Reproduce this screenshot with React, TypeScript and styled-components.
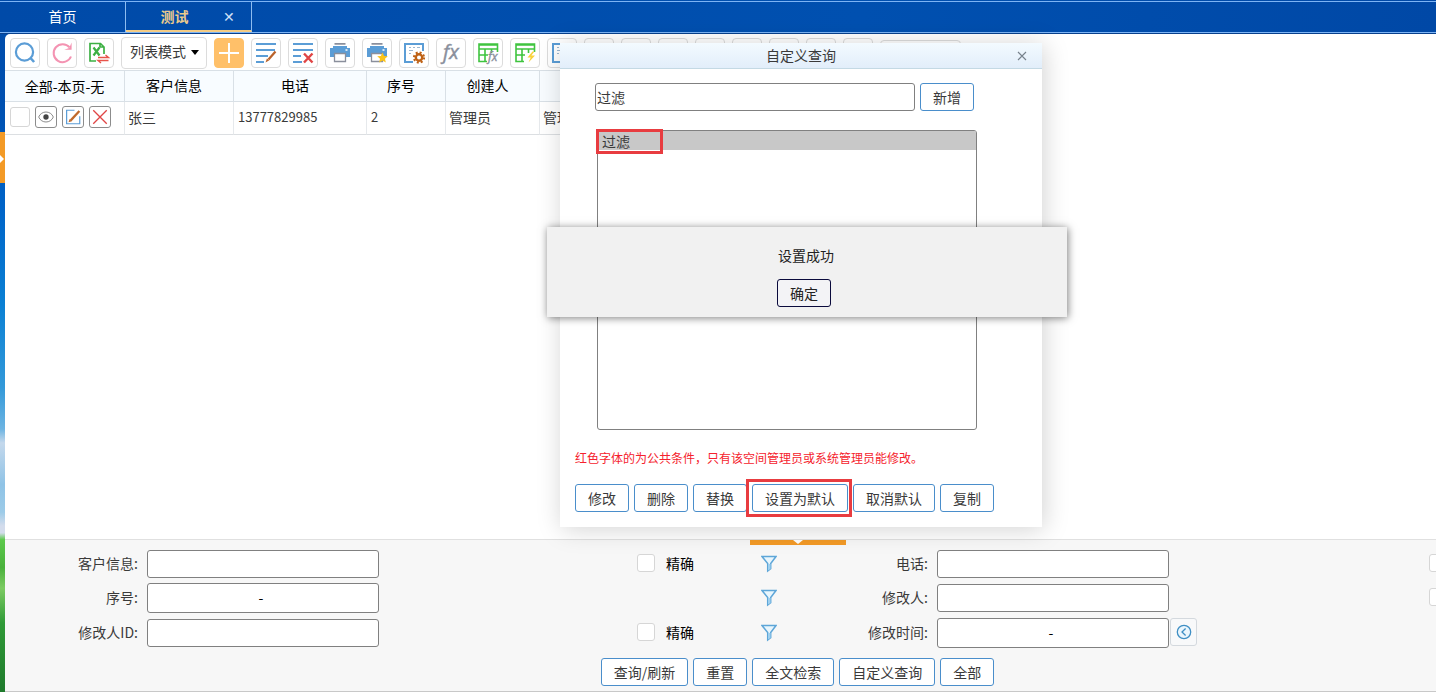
import React from "react";
import styled, { createGlobalStyle } from "styled-components";

const GlobalStyle = createGlobalStyle`
  * { box-sizing: border-box; }
  html, body { margin: 0; overflow: hidden; }
  body, button, input, select {
    font-family: "Noto Sans CJK SC", sans-serif;
    font-size: 14px;
    color: #3a3a3a;
  }
  button { cursor: pointer; }
`;

const Page = styled.div`
  position: relative;
  display: flex;
  flex-direction: column;
  min-height: 100vh;
  overflow: hidden;
  background: linear-gradient(
    #004ba9 0%, #0050b0 15%, #0064c8 30%, #0a80d4 44%, #3399d9 56%,
    #6db4e2 62%, #c4d8ec 64%, #8fc3e6 70%, #9ccbe8 74%, #d3dcec 76%,
    #d3dcec 77%, #5cc94b 78%, #49b13c 82%, #7ccb62 85%, #2f9a37 90%, #1f7a2c 100%
  );
`;

/* Tab strip */
const TabBar = styled.nav`
  display: flex;
  height: 34px;
  padding-top: 1px;
  background: linear-gradient(90deg, #004aa8, #0050b0 60%, #0048a6);
  border-bottom: 1px solid #08408c;
`;
const TabTrack = styled.div`
  flex: 1;
  display: flex;
  border-top: 1px solid #7db4f5;
  border-bottom: 1px solid #7db4f5;
`;
const Tab = styled.div<{ $active?: boolean }>`
  display: flex;
  align-items: center;
  width: 126px;
  padding-bottom: ${(p) => (p.$active ? "0" : "2px")};
  border-right: 1px solid #8dbcf0;
  border-bottom: ${(p) => (p.$active ? "2px solid #f3cb85" : "0")};
`;
const TabLink = styled.a<{ $active?: boolean }>`
  flex: 1;
  text-align: center;
  text-decoration: none;
  padding-left: ${(p) => (p.$active ? "8px" : "0")};
  font-weight: ${(p) => (p.$active ? 700 : 400)};
  color: ${(p) => (p.$active ? "#eccb8c" : "#fff")};
`;
const TabClose = styled.button`
  width: 28px;
  height: 24px;
  margin-right: 8px;
  padding: 0;
  border: 0;
  background: none;
  color: #cfe0f7;
`;

/* Workspace */
const Workspace = styled.div`
  flex: 1;
  display: flex;
`;
const Rail = styled.aside`
  width: 5px;
  padding-top: 98px;
`;
const RailHandle = styled.button`
  display: block;
  width: 5px;
  height: 51px;
  padding: 0;
  border: 0;
  background: #f39a26;
`;
const Main = styled.main`
  flex: 1;
  min-width: 0;
  display: flex;
  flex-direction: column;
  background: #fff;
  border-top-left-radius: 5px;
  overflow: hidden;
`;

const Toolbar = styled.div`
  display: flex;
  align-items: center;
  gap: 7px;
  height: 36px;
  padding: 2px 0 0 5px;
`;
const ToolButton = styled.button<{ $primary?: boolean }>`
  display: flex;
  flex: none;
  align-items: center;
  justify-content: center;
  width: 30px;
  height: 30px;
  padding: 0;
  border: 1px solid ${(p) => (p.$primary ? "#ffc069" : "#dcdcdc")};
  border-radius: 4px;
  background: ${(p) => (p.$primary ? "#ffc069" : "#fff")};
`;
const ModeWrap = styled.label`
  position: relative;
  flex: none;
  width: 86px;
`;
const ModeSelect = styled.select`
  display: block;
  width: 100%;
  height: 32px;
  padding: 0 8px 4px;
  appearance: none;
  border: 1px solid #dcdcdc;
  border-radius: 4px;
  background: #fff;
`;
const Caret = styled.svg`
  position: absolute;
  right: 8px;
  top: 13px;
  pointer-events: none;
`;
const WideTool = styled.input`
  flex: none;
  width: 81px;
  height: 26px;
  border: 1px solid #dcdcdc;
  border-radius: 4px;
`;

const DataTable = styled.table`
  table-layout: fixed;
  width: 640px;
  border-collapse: separate;
  border-spacing: 0;
  border-top: 1px solid #d9e0e6;
`;
const HeadCell = styled.th<{ $width: number }>`
  width: ${(p) => p.$width}px;
  height: 31px;
  padding: 0 10px 2px 0;
  font-weight: 400;
  color: #000;
  white-space: nowrap;
  background: #f8fcff;
  border-right: 1px solid #d9e0e6;
  border-bottom: 1px solid #d9e0e6;
  &:first-child { padding: 0; }
`;
const Cell = styled.td<{ $number?: boolean }>`
  height: 33px;
  padding: 0 0 3px ${(p) => (p.$number ? "4px" : "3px")};
  border-right: 1px solid #e6e9ec;
  border-bottom: 1px solid #dcdfe2;
  font-size: ${(p) => (p.$number ? "13px" : "14px")};
`;
const RowActions = styled.div`
  display: flex;
  align-items: center;
  gap: 5px;
  padding-left: 2px;
`;
const Check = styled.input`
  appearance: none;
  flex: none;
  width: 20px;
  height: 20px;
  margin: 0;
  border: 1px solid #d6d6d6;
  border-radius: 3px;
  background: #fff;
`;
const RowButton = styled.button`
  display: flex;
  align-items: center;
  justify-content: center;
  width: 22px;
  height: 22px;
  padding: 0;
  border: 1px solid #8c8c8c;
  border-radius: 3px;
  background: #fff;
`;

/* Buttons and text boxes shared by the dialog and the search panel */
const Button = styled.button`
  flex: none;
  height: 28px;
  padding: 0 12px;
  border: 1px solid #4a8ecb;
  border-radius: 3px;
  background: #fff;
  line-height: 26px;
  white-space: nowrap;
`;
const TextBox = styled.input`
  width: 100%;
  height: 28px;
  padding: 0 1px;
  border: 1px solid #808080;
  border-radius: 3px;
  background: #fff;
`;

/* Search panel */
const SearchPanel = styled.form`
  margin-top: auto;
  border-top: 1px solid #e0e0e0;
  border-bottom: 1px solid #c8c8c8;
  background: #f7f7f7;
`;
const SearchContent = styled.div`
  position: relative;
  min-width: 1586px;
  padding: 10px 0 5px;
`;
const Handle = styled.button`
  position: absolute;
  top: 0;
  left: calc(50% - 48px);
  width: 96px;
  height: 5px;
  padding: 0;
  border: 0;
  background: #f39a26;
  svg { display: block; margin: 0 auto; }
`;
const FieldGrid = styled.div`
  display: grid;
  grid-template-columns: 790px 792px;
  grid-template-rows: 28px 30px 30px;
  row-gap: 5px;
`;
const Field = styled.div`
  display: grid;
  grid-template-columns: 133px 9px 232px 28px 1fr 29px 95px 34px;
  align-items: center;
`;
const FieldLabel = styled.label`
  padding-bottom: 2px;
  text-align: right;
`;
const FieldControl = styled.div`
  grid-column: 3;
`;
const Range = styled.div`
  display: flex;
  align-items: center;
  height: 30px;
  padding: 0 4px 2px 0;
  border: 1px solid #808080;
  border-radius: 3px;
  background: #fff;
  color: #000;
`;
const RangeInput = styled.input`
  flex: 1;
  min-width: 0;
  height: 26px;
  padding: 0 2px;
  border: 0;
  background: none;
`;
const TimeButton = styled.button`
  grid-column: 4;
  align-self: start;
  display: flex;
  align-items: center;
  justify-content: center;
  width: 27px;
  height: 28px;
  margin-left: 1px;
  padding: 0;
  border: 1px solid #d4d9de;
  border-radius: 3px;
  background: #f8f9fa;
`;
const ExactCheck = styled(Check)`
  grid-column: 6;
  width: 18px;
  height: 18px;
  margin-bottom: 2px;
`;
const ExactLabel = styled.label`
  grid-column: 7;
  padding-bottom: 2px;
  color: #000;
`;
const FilterButton = styled.button`
  grid-column: 8;
  width: 16px;
  height: 18px;
  padding: 0;
  border: 0;
  background: none;
  svg { display: block; }
`;
const Actions = styled.div`
  display: flex;
  justify-content: center;
  gap: 5px;
  padding: 10px 1px 0 0;
`;

/* Query dialog */
const Dialog = styled.section`
  position: absolute;
  left: 560px;
  top: 43px;
  width: 482px;
  background: #fff;
  box-shadow: 2px 2px 24px rgba(0, 0, 0, 0.18);
`;
const DialogHeader = styled.header`
  display: grid;
  grid-template-columns: 40px 1fr 40px;
  align-items: center;
  height: 26px;
  border-bottom: 1px solid #c4d9e4;
  background: linear-gradient(#f3faff, #e2eefa);
  text-align: center;
`;
const DialogTitle = styled.h2`
  grid-column: 2;
  margin: 0;
  padding-bottom: 2px;
  font-size: 14px;
  font-weight: 400;
  line-height: 22px;
`;
const CloseButton = styled.button`
  display: flex;
  justify-content: center;
  padding: 0;
  border: 0;
  background: none;
`;
const DialogBody = styled.div`
  padding: 14px 15px 15px;
`;
const NameRow = styled.div`
  display: flex;
  gap: 5px;
  padding: 0 53px 0 20px;
`;
const ListWrap = styled.div`
  position: relative;
  margin: 19px 50px 0 22px;
`;
const QueryList = styled.select`
  display: block;
  width: 100%;
  height: 300px;
  padding: 0;
  border: 1px solid #808080;
  border-radius: 3px;
  background: #fff;
  outline: 0;
  overflow: hidden;
`;
const QueryOption = styled.option`
  height: 19px;
  min-height: 19px;
  padding: 0 4px;
  line-height: 19px;
  color: #3a3a3a;
  &:checked {
    color: #3a3a3a;
    background: #c8c8c8 linear-gradient(#c8c8c8, #c8c8c8);
  }
`;
const ListMark = styled.span`
  position: absolute;
  left: -1px;
  top: -1px;
  width: 67px;
  height: 25px;
  border: 3px solid #e83c40;
  pointer-events: none;
`;
const Note = styled.p`
  margin: 18px 0 16px;
  font-size: 12px;
  line-height: 20px;
  color: #f5222d;
`;
const DialogActions = styled.div`
  display: flex;
  gap: 5px;
`;
const Marked = styled.span`
  position: relative;
  display: flex;
  &::after {
    content: "";
    position: absolute;
    inset: -5px -4px -5px -6px;
    border: 3px solid #e83c40;
    pointer-events: none;
  }
`;

/* Message box */
const Message = styled.section`
  position: absolute;
  left: 547px;
  top: 227px;
  display: flex;
  flex-direction: column;
  align-items: center;
  width: 520px;
  padding: 16px 0 10px;
  background: #f1f1f1;
  box-shadow: 1px 1px 8px rgba(0, 0, 0, 0.5);
`;
const MessageText = styled.p`
  margin: 0 2px 12px 0;
  line-height: 24px;
  color: #222;
`;
const OkButton = styled(Button)`
  margin-right: 6px;
  border-color: #0a0a3c;
  background: #f3f3f6;
  color: #222;
`;

const BLUE = "#5b9dd6";
const GRAY = "#8a8f9c";

const IconSvg = styled.svg`
  display: block;
  overflow: visible;
`;

const Icon = ({ size = 24, children }: { size?: number; children: React.ReactNode }) => (
  <IconSvg width={size} height={size} viewBox="0 0 24 24" fill="none" aria-hidden="true">
    {children}
  </IconSvg>
);

const SearchIcon = () => (
  <Icon>
    <circle cx="11.5" cy="11" r="8.6" stroke={BLUE} strokeWidth="2.2" />
    <path d="M17.5 17l3.6 4" stroke={BLUE} strokeWidth="2.6" />
  </Icon>
);
const RefreshIcon = () => (
  <Icon>
    <path d="M19.6 6.4A9 9 0 1 0 21 15.5" stroke="#f493b2" strokeWidth="2" />
    <path d="M21.6 1.6v7.2h-7.4l5-1.8z" fill="#f493b2" />
  </Icon>
);
const ExcelIcon = () => (
  <Icon>
    <path d="M9 20H3V2.5h10.5L17 6V13M13 2.5V6h4" stroke="#3cb043" strokeWidth="1.7" />
    <path d="M6.5 6.5l6 8M12.5 6.5l-6 8" stroke="#3cb043" strokeWidth="2.2" />
    <path d="M11 16.5h10.5L18.5 14M21.5 19.5H11l3 2.5" stroke="#e8534a" strokeWidth="1.4" />
  </Icon>
);
const PlusIcon = () => (
  <Icon>
    <path d="M12 2v20M2 12h20" stroke="#fff" strokeWidth="2" />
  </Icon>
);
const EditLinesIcon = () => (
  <Icon>
    <path d="M2 3h20M2 9h19M2 15h12M2 21h8" stroke={BLUE} strokeWidth="2" />
    <path d="M21.5 10.5L14.5 18.5" stroke="#b9622a" strokeWidth="2.2" />
    <path d="M15.3 19.2L11.5 21.5l1.4-4z" fill="#b9622a" />
  </Icon>
);
const DeleteLinesIcon = () => (
  <Icon>
    <path d="M2 3h20M2 9h20M2 15h8M2 21h9" stroke={BLUE} strokeWidth="2" />
    <path d="M13 12.5l8.5 9M21.5 12.5l-8.5 9" stroke="#e04545" strokeWidth="2.4" />
  </Icon>
);
const PrinterShape = () => (
  <>
    <path d="M6.5 2h11v1.800h-11z" fill={GRAY} />
    <path d="M5 5h14v2h3v9h-4v-3H6v3H2V7h3z" fill={BLUE} />
    <path d="M6.5 12.5h11v8h-11z" fill="#fff" stroke={GRAY} strokeWidth="1.3" />
    <path d="M17.5 9h2" stroke="#fff" strokeWidth="1.4" />
  </>
);
const PrinterIcon = () => (
  <Icon>
    <PrinterShape />
  </Icon>
);
const PrinterStarIcon = () => (
  <Icon>
    <PrinterShape />
    <path d="M17.500 11.500l1.600 3.400 3.700.4-2.800 2.500.8 3.700-3.300-1.900-3.300 1.900.8-3.700-2.800-2.500 3.700-.4z" fill="#fcc419" />
  </Icon>
);
const DocShape = () => (
  <>
    <path d="M11 21H3V3h18v7" stroke={BLUE} strokeWidth="2" />
    <path d="M7 6.5h2M11 6.5h2M15 6.5h3M7 9.5h4M7 12.5h2" stroke="#9db7d0" strokeWidth="1.2" />
  </>
);
const DocGearIcon = () => (
  <Icon>
    <DocShape />
    <circle cx="17" cy="16.5" r="3.2" stroke="#bf6216" strokeWidth="2.4" />
    <circle cx="17" cy="16.5" r="5" stroke="#bf6216" strokeWidth="2.2" strokeDasharray="2 1.927" />
  </Icon>
);
const DocIcon = () => (
  <Icon>
    <DocShape />
  </Icon>
);
const FxIcon = () => (
  <Icon>
    <text x="4" y="18" fontFamily="Open Sans, sans-serif" fontStyle="italic" fontSize="20" stroke={GRAY} strokeWidth="0.4" fill={GRAY}>fx</text>
  </Icon>
);
const GridShape = () => (
  <path d="M11 20.500H3V3h18.500v8M3 8H21.500M3 14H12M9 8V20.500M15.500 8V12M3 4H21.500" stroke="#3fc43f" strokeWidth="1.6" />
);
const GridFxIcon = () => (
  <Icon>
    <GridShape />
    <text x="12" y="20" fontFamily="Open Sans, sans-serif" fontStyle="italic" fontSize="12" stroke={GRAY} strokeWidth="0.4" fill={GRAY}>fx</text>
  </Icon>
);
const GridBoltIcon = () => (
  <Icon>
    <GridShape />
    <path d="M19.500 10.500l-5 6h3.200l-2.200 5 6.500-7h-3.600l3-4z" fill="#f9d23c" />
  </Icon>
);
const EyeIcon = () => (
  <Icon size={16}>
    <path d="M1 12C5 2 19 2 23 12 19 22 5 22 1 12z" stroke="#8c8c8c" strokeWidth="1.5" />
    <circle cx="12" cy="12" r="4" fill="#444" />
  </Icon>
);
const EditIcon = () => (
  <Icon size={18}>
    <path d="M14 3H3.5v18H21V11" stroke={BLUE} strokeWidth="1.6" />
    <path d="M20.5 4L9 16.5" stroke="#c0692a" strokeWidth="3" />
    <path d="M10.5 17.5L6 19l1.500-4.500z" fill="#c0692a" />
  </Icon>
);
const CrossIcon = () => (
  <Icon size={18}>
    <path d="M3 3l18 18M21 3L3 21" stroke="#e04545" strokeWidth="1.8" />
  </Icon>
);
const FilterIcon = () => (
  <svg width="16" height="18" viewBox="0 0 16 18" fill="none" aria-hidden="true">
    <path d="M1 1.5h14L9.7 8.5v5.2L6.7 16V8.5z" fill="#e9f6fd" stroke="#5ea6d8" strokeWidth="1.5" />
    <path d="M7 9h2.5v5L7 15.5z" fill="#9fd0ef" />
  </svg>
);
const CircleLeftIcon = () => (
  <svg width="16" height="16" viewBox="0 0 16 16" fill="none" aria-hidden="true">
    <circle cx="8" cy="8" r="6.7" stroke="#3f8fc4" strokeWidth="1.3" fill="#eaf6fd" />
    <path d="M9.6 4.5L6 8l3.6 3.5" stroke="#3f8fc4" strokeWidth="1.3" />
  </svg>
);

const leadTools = [
  { label: "查询", icon: <SearchIcon /> },
  { label: "刷新", icon: <RefreshIcon /> },
  { label: "导出", icon: <ExcelIcon /> },
];
const tools = [
  { label: "批量编辑", icon: <EditLinesIcon /> },
  { label: "批量删除", icon: <DeleteLinesIcon /> },
  { label: "打印", icon: <PrinterIcon /> },
  { label: "打印模板", icon: <PrinterStarIcon /> },
  { label: "表单设置", icon: <DocGearIcon /> },
  { label: "公式", icon: <FxIcon /> },
  { label: "表格公式", icon: <GridFxIcon /> },
  { label: "快捷表格", icon: <GridBoltIcon /> },
  { label: "文档", icon: <DocIcon /> },
];
const moreTools = [1, 2, 3, 4, 5, 6, 7, 8];

const columns = [
  { title: "全部-本页-无", width: 120 },
  { title: "客户信息", width: 109 },
  { title: "电话", width: 133 },
  { title: "序号", width: 79 },
  { title: "创建人", width: 94 },
  { title: "", width: 105 },
];

type FieldSpec = {
  id: string;
  label: string;
  range?: boolean;
  time?: boolean;
  exact?: "labelled" | "box";
};
const fields: FieldSpec[] = [
  { id: "customer", label: "客户信息", exact: "labelled" },
  { id: "phone", label: "电话", exact: "box" },
  { id: "serial", label: "序号", range: true },
  { id: "editor", label: "修改人", exact: "box" },
  { id: "editorId", label: "修改人ID", exact: "labelled" },
  { id: "editTime", label: "修改时间", range: true, time: true },
];

const SearchField = ({ id, label, range, exact, time }: FieldSpec) => (
  <Field>
    <FieldLabel htmlFor={id}>{label}:</FieldLabel>
    <FieldControl>
      {range ? (
        <Range>
          <RangeInput id={id} />-<RangeInput aria-label={label} />
        </Range>
      ) : (
        <TextBox id={id} />
      )}
    </FieldControl>
    {time && (
      <TimeButton type="button" aria-label="选择时间">
        <CircleLeftIcon />
      </TimeButton>
    )}
    {exact && <ExactCheck type="checkbox" id={`${id}-exact`} aria-label="精确" />}
    {exact === "labelled" && <ExactLabel htmlFor={`${id}-exact`}>精确</ExactLabel>}
    <FilterButton type="button" aria-label="筛选">
      <FilterIcon />
    </FilterButton>
  </Field>
);

export default function App() {
  return (
    <Page>
      <GlobalStyle />
      <TabBar>
        <TabTrack>
          <Tab>
            <TabLink href="#home">首页</TabLink>
          </Tab>
          <Tab $active>
            <TabLink href="#test" $active>测试</TabLink>
            <TabClose aria-label="关闭标签">✕</TabClose>
          </Tab>
        </TabTrack>
      </TabBar>

      <Workspace>
        <Rail>
          <RailHandle aria-label="展开">
            <svg width="5" height="10" viewBox="0 0 5 10" aria-hidden="true">
              <path d="M0 1l4 4-4 4z" fill="#fff" />
            </svg>
          </RailHandle>
        </Rail>
        <Main>
          <Toolbar>
            {leadTools.map((t) => (
              <ToolButton key={t.label} aria-label={t.label}>{t.icon}</ToolButton>
            ))}
            <ModeWrap>
              <ModeSelect aria-label="显示模式">
                <option>列表模式</option>
              </ModeSelect>
              <Caret width="8" height="5" viewBox="0 0 8 5" aria-hidden="true">
                <path d="M0 0h8L4 5z" fill="#000" />
              </Caret>
            </ModeWrap>
            <ToolButton $primary aria-label="新增"><PlusIcon /></ToolButton>
            {tools.map((t) => (
              <ToolButton key={t.label} aria-label={t.label}>{t.icon}</ToolButton>
            ))}
            {moreTools.map((n) => (
              <ToolButton key={n} aria-label={`工具${n}`} />
            ))}
            <WideTool aria-label="快速查找" />
          </Toolbar>

          <DataTable>
            <thead>
              <tr>
                {columns.map((c) => (
                  <HeadCell key={c.title} $width={c.width}>{c.title}</HeadCell>
                ))}
              </tr>
            </thead>
            <tbody>
              <tr>
                <Cell>
                  <RowActions>
                    <Check type="checkbox" aria-label="选择张三" />
                    <RowButton aria-label="查看"><EyeIcon /></RowButton>
                    <RowButton aria-label="编辑"><EditIcon /></RowButton>
                    <RowButton aria-label="删除"><CrossIcon /></RowButton>
                  </RowActions>
                </Cell>
                <Cell>张三</Cell>
                <Cell $number>13777829985</Cell>
                <Cell $number>2</Cell>
                <Cell>管理员</Cell>
                <Cell>管理员</Cell>
              </tr>
            </tbody>
          </DataTable>

          <SearchPanel>
            <SearchContent>
              <Handle type="button" aria-label="收起">
                <svg width="10" height="5" viewBox="0 0 10 5" aria-hidden="true">
                  <path d="M0 0h10L5 4z" fill="#fff" />
                </svg>
              </Handle>
              <FieldGrid>
                {fields.map((f) => (
                  <SearchField key={f.id} {...f} />
                ))}
              </FieldGrid>
              <Actions>
                {["查询/刷新", "重置", "全文检索", "自定义查询", "全部"].map((a) => (
                  <Button type="button" key={a}>{a}</Button>
                ))}
              </Actions>
            </SearchContent>
          </SearchPanel>
        </Main>
      </Workspace>

      <Dialog role="dialog" aria-label="自定义查询">
        <DialogHeader>
          <DialogTitle>自定义查询</DialogTitle>
          <CloseButton aria-label="关闭">
            <svg width="10" height="10" viewBox="0 0 10 10" aria-hidden="true">
              <path d="M1 1l8 8M9 1L1 9" stroke="#77828c" strokeWidth="1.1" />
            </svg>
          </CloseButton>
        </DialogHeader>
        <DialogBody>
          <NameRow>
            <TextBox aria-label="查询名称" defaultValue="过滤" />
            <Button>新增</Button>
          </NameRow>
          <ListWrap>
            <QueryList aria-label="查询列表" size={10} defaultValue="filter">
              <QueryOption value="filter">过滤</QueryOption>
            </QueryList>
            <ListMark />
          </ListWrap>
          <Note>红色字体的为公共条件，只有该空间管理员或系统管理员能修改。</Note>
          <DialogActions>
            <Button>修改</Button>
            <Button>删除</Button>
            <Button>替换</Button>
            <Marked>
              <Button>设置为默认</Button>
            </Marked>
            <Button>取消默认</Button>
            <Button>复制</Button>
          </DialogActions>
        </DialogBody>
      </Dialog>

      <Message role="alertdialog" aria-label="提示">
        <MessageText>设置成功</MessageText>
        <OkButton>确定</OkButton>
      </Message>
    </Page>
  );
}
